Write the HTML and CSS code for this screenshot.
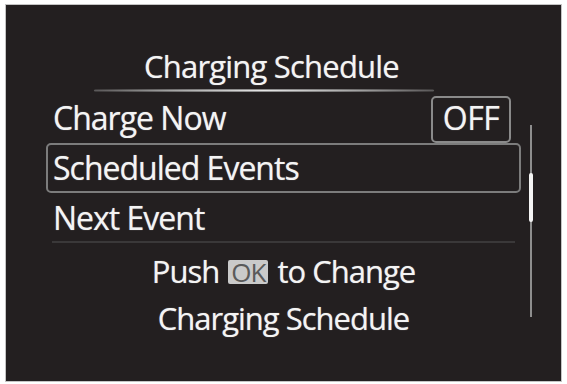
FILE: index.html
```html
<!DOCTYPE html>
<html>
<head>
<meta charset="utf-8">
<link rel="stylesheet" href="styles.css">
</head>
<body>
<div class="screen">
  <div class="title">Charging Schedule</div>
  <div class="menu">
    <div class="row">
      <span class="label">Charge Now</span>
      <span class="toggle">OFF</span>
    </div>
    <div class="row selected">
      <span class="label">Scheduled Events</span>
    </div>
    <div class="row">
      <span class="label">Next Event</span>
    </div>
    <div class="separator"></div>
    <div class="hint">
      <div class="hint-line">Push <span class="ok">OK</span> to Change</div>
      <div class="hint-line">Charging Schedule</div>
    </div>
    <div class="scrollbar"><div class="thumb"></div></div>
  </div>
</div>
</body>
</html>
```
FILE: styles.css
```css
html, body {
  margin: 0;
  padding: 0;
  background: #ffffff;
}
body {
  width: 567px;
  height: 384px;
  overflow: hidden;
  font-family: "Open Sans", "Noto Sans", sans-serif;
}
.screen {
  margin: 5px 0 0 6px;
  width: 555px;
  height: 376px;
  background: #231f20;
  box-shadow: 0 0 0 1px #c4c4c4;
  box-sizing: border-box;
  padding: 43px 40px 0 40px;
  color: #f4f4f4;
  text-shadow: 0 0 1px rgba(255, 255, 255, 0.55);
}
.title {
  position: relative;
  height: 36px;
  line-height: 36px;
  font-size: 31px;
  letter-spacing: -0.8px;
  text-align: center;
  margin-right: 24px;
}
.title::after {
  content: "";
  position: absolute;
  left: 48px;
  right: 63px;
  bottom: -8px;
  height: 3px;
  border-radius: 2px;
  background: radial-gradient(ellipse at center, #e6e6e6 0%, #a0a0a0 40%, rgba(130,130,130,0.35) 80%, rgba(120,120,120,0) 100%);
}
.menu {
  position: relative;
  margin-top: 11px;
}
.row {
  display: flex;
  align-items: center;
  justify-content: space-between;
  height: 48px;
  padding: 0 10px 0 7px;
  font-size: 32px;
  letter-spacing: -1px;
  box-sizing: border-box;
}
.row.selected {
  height: 50px;
  border: 2px solid #7c7c7c;
  border-radius: 5px;
  padding-left: 5px;
  padding-bottom: 2px;
}
.row:first-child .label {
  margin-top: -4px;
}
.row:last-of-type {
  height: 52px;
}
.toggle {
  display: flex;
  align-items: center;
  justify-content: center;
  width: 80px;
  height: 47px;
  box-sizing: border-box;
  border: 2px solid #8a8a8a;
  border-radius: 5px;
  font-size: 32px;
  letter-spacing: -0.5px;
  line-height: 40px;
  padding-bottom: 2px;
}
.separator {
  height: 2px;
  background: #3a3839;
  margin: 0 6px 0 6px;
}
.hint {
  text-align: center;
  font-size: 31px;
  letter-spacing: -1px;
  line-height: 47px;
  padding-top: 5px;
}
.ok {
  display: inline-block;
  background: #cacaca;
  color: #5a5a5a;
  text-shadow: none;
  font-size: 26px;
  line-height: 24px;
  width: 40px;
  text-align: center;
  border-radius: 2px;
  margin: 0 2px;
  vertical-align: 1px;
}
.scrollbar {
  position: absolute;
  left: 484px;
  top: 30px;
  width: 2px;
  height: 192px;
  background: #8e8e8e;
}
.thumb {
  position: absolute;
  left: -1px;
  top: 48px;
  width: 4px;
  height: 49px;
  background: #f4f4f4;
  border-radius: 2px;
}
```
